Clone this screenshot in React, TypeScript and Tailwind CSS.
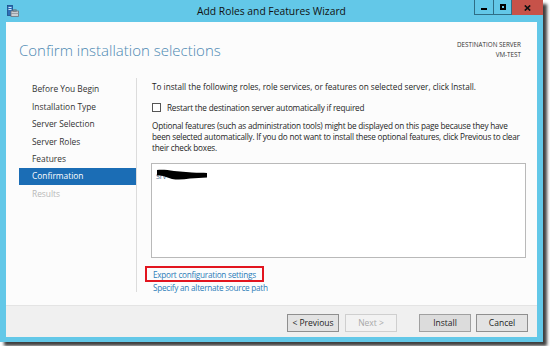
import React from "react";

const F = { fontFamily: '"Open Sans", "Noto Sans", sans-serif' } as const;

function TitleIcon() {
  return (
    <svg width="12" height="12" viewBox="0 0 12 12" className="shrink-0">
      <rect x="0.5" y="0.5" width="5" height="10" fill="#2d6fb8" stroke="#1d4f8a" strokeWidth="0.8" />
      <rect x="1.5" y="2" width="3" height="1" fill="#cfe6fa" />
      <rect x="1.5" y="4" width="3" height="1" fill="#cfe6fa" />
      <rect x="4" y="6" width="7.5" height="5.5" fill="#c9ced3" stroke="#6b737a" strokeWidth="0.8" />
      <rect x="6.2" y="4.8" width="3" height="1.4" fill="none" stroke="#6b737a" strokeWidth="0.8" />
      <rect x="4" y="8" width="7.5" height="0.8" fill="#8c949b" />
    </svg>
  );
}

function Btn({ label, disabled, dark }: { label: string; disabled?: boolean; dark?: boolean }) {
  return (
    <div
      className={
        "w-[52px] h-[18px] flex items-center justify-center text-[8.5px] border " +
        (disabled
          ? "border-[#cfcfcf] bg-[#f2f2f2] text-[#a8a8a8]"
          : dark
          ? "border-[#a0a0a0] bg-[#dcdcdc] text-[#1e1e1e]"
          : "border-[#8f8f8f] bg-[#e3e3e3] text-[#1e1e1e]")
      }
    >
      {label}
    </div>
  );
}

export default function App() {
  const nav = [
    "Before You Begin",
    "Installation Type",
    "Server Selection",
    "Server Roles",
    "Features",
    "Confirmation",
    "Results",
  ];
  return (
    <div className="w-[550px] h-[346px] bg-white overflow-hidden" style={F}>
      <div className="w-[543px] h-[342px] bg-[#63c8e8] flex flex-col shadow-[4px_4px_3px_rgba(0,0,0,0.75)]">
        {/* title bar */}
        <div className="h-[22px] flex items-start relative shrink-0">
          <div className="pl-[7px] pt-[5px]">
            <TitleIcon />
          </div>
          <div className="absolute left-0 right-0 top-[3px] text-center text-[10.3px] text-[#111] leading-[16px]">
            Add Roles and Features Wizard
          </div>
          <div className="ml-auto flex h-[15px] relative">
            <div className="w-[20px] h-[15px] border border-[#2f6e86] border-t-0 flex items-end justify-center pb-[4px]">
              <div className="w-[6px] h-[2px] bg-black" />
            </div>
            <div className="w-[18px] h-[15px] border-b border-r border-[#2f6e86] flex items-center justify-center">
              <div className="w-[6px] h-[6px] border-2 border-black" />
            </div>
            <div className="w-[31px] h-[15px] bg-[#c75249] flex items-center justify-center">
              <svg width="7" height="6" viewBox="0 0 7 6">
                <path d="M0.8 0.5 L6.2 5.5 M6.2 0.5 L0.8 5.5" stroke="#111" strokeWidth="1.7" />
              </svg>
            </div>
          </div>
        </div>

        {/* client area */}
        <div className="mx-[6px] h-[315px] bg-[#fcfcfc] flex flex-col">
          {/* header */}
          <div className="h-[56px] flex items-start shrink-0">
            <div className="pl-[13px] pt-[18px] text-[15px] leading-[20px] font-light text-[#4b88b2]">
              Confirm installation selections
            </div>
            <div className="ml-auto pr-[16px] pt-[18px] text-right text-[6.3px] leading-[9.5px] text-[#333]">
              <div>DESTINATION SERVER</div>
              <div>VM-TEST</div>
            </div>
          </div>

          {/* body */}
          <div className="flex h-[214px] shrink-0">
            <div className="w-[131px] pl-[13px] pt-[3px] border-r border-[#dcdcdc] text-[8.4px] text-[#333]">
              {nav.map((n) => (
                <div
                  key={n}
                  className={
                    "h-[17.4px] flex items-center pl-[13px] " +
                    (n === "Confirmation"
                      ? "bg-[#1b6db5] text-white"
                      : n === "Results"
                      ? "text-[#b8b8b8]"
                      : "")
                  }
                >
                  {n}
                </div>
              ))}
            </div>

            <div className="flex-1 pl-[14px] pr-[11px] pt-[2.5px] text-[8.2px] leading-[11px] text-[#1e1e1e]">
              <div className="pl-[1px] whitespace-nowrap">
                To install the following roles, role services, or features on selected server, click Install.
              </div>
              <div className="mt-[10px] pl-[1px] flex items-center h-[11px]">
                <div className="w-[9px] h-[9px] border border-[#555] bg-white" />
                <span className="ml-[6px] tracking-[-0.2px]">Restart the destination server automatically if required</span>
              </div>
              <div className="mt-[7px] pl-[1px] whitespace-nowrap tracking-[-0.22px]">
                <div>Optional features (such as administration tools) might be displayed on this page because they have</div>
                <div>been selected automatically. If you do not want to install these optional features, click Previous to clear</div>
                <div>their check boxes.</div>
              </div>
              <div className="mt-[10px] h-[95px] border border-[#b9b9b9] bg-white relative">
                <div className="absolute left-[4px] top-[6px]">
                  <span className="text-[7px] text-[#4a6a90]">Srv</span>
                </div>
                <svg className="absolute left-[4px] top-[5px]" width="52" height="12" viewBox="0 0 52 12">
                  <path
                    d="M1 1 C6 0.5 12 1 18 2 C24 2.5 30 3 36 3.5 C42 3.8 47 3.5 51 4 L51 8.5 C45 9 40 9 34 9.5 C28 10.5 22 11 16 10 C12 9 8 7 4 6.5 L1 6.5 Z"
                    fill="#000"
                  />
                </svg>
              </div>
              <div className="mt-[10px] leading-[13px] text-[#2b7cb9] pl-[2px] tracking-[-0.25px]">
                <div className="relative">
                  <span>Export configuration settings</span>
                  <div className="absolute left-[-8px] top-[-1.5px] w-[119px] h-[16px] border-2 border-[#e2151f]" />
                </div>
                <div>Specify an alternate source path</div>
              </div>
            </div>
          </div>

          {/* footer */}
          <div className="mt-auto h-[32px] bg-[#f0f0f0] border-t border-[#e4e4e4] flex items-start justify-end pr-[9px] pt-[8px] text-[#1e1e1e]">
            <Btn label="< Previous" />
            <div className="w-[6px]" />
            <Btn label="Next >" disabled />
            <div className="w-[22px]" />
            <Btn label="Install" dark />
            <div className="w-[5px]" />
            <Btn label="Cancel" />
          </div>
        </div>
      </div>
    </div>
  );
}
